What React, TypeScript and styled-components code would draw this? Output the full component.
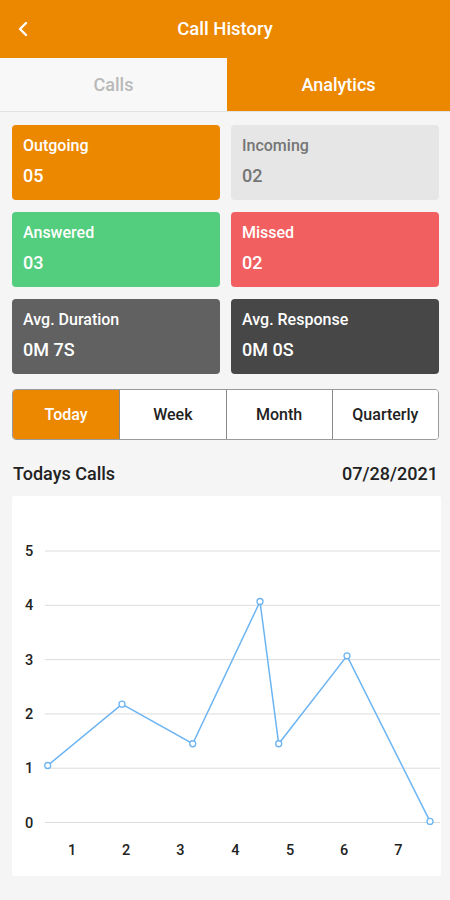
import styled, { createGlobalStyle } from "styled-components";

const GlobalStyle = createGlobalStyle`
  html, body {
    margin: 0;
    padding: 0;
    background: #f5f5f5;
    font-family: Roboto, "Noto Sans", sans-serif;
  }
  * { box-sizing: border-box; }
`;

const ORANGE = "#ec8700";

const Page = styled.div`
  width: 450px;
  min-height: 900px;
  background: #f5f5f5;
  display: flex;
  flex-direction: column;
`;

const Header = styled.header`
  height: 58px;
  background: ${ORANGE};
  display: grid;
  grid-template-columns: 48px 1fr 48px;
  align-items: center;
`;

const BackButton = styled.button`
  border: none;
  background: transparent;
  padding: 0 0 0 17px;
  height: 58px;
  display: flex;
  align-items: center;
  cursor: pointer;
`;

const Title = styled.h1`
  margin: 0;
  text-align: center;
  color: #ffffff;
  font-size: 18.5px;
  font-weight: 500;
`;

const Tabs = styled.div`
  display: grid;
  grid-template-columns: 227px 1fr;
  height: 54px;
  border-bottom: 1px solid #e2e2e2;
`;

const Tab = styled.div<{ $active?: boolean }>`
  display: flex;
  align-items: center;
  justify-content: center;
  font-size: 18px;
  font-weight: 500;
  background: ${(p) => (p.$active ? ORANGE : "#f8f8f8")};
  color: ${(p) => (p.$active ? "#ffffff" : "#b8b8b8")};
`;

const Content = styled.div`
  padding: 13px 11px 0 12px;
  display: flex;
  flex-direction: column;
`;

const StatGrid = styled.div`
  display: grid;
  grid-template-columns: 208px 208px;
  column-gap: 11px;
  row-gap: 12px;
`;

const StatCard = styled.div<{ $bg: string; $fg: string }>`
  height: 75px;
  border-radius: 4px;
  background: ${(p) => p.$bg};
  color: ${(p) => p.$fg};
  padding: 12px 11px 0;
  display: flex;
  flex-direction: column;
  gap: 11px;
`;

const StatLabel = styled.span`
  font-size: 16px;
  font-weight: 500;
  line-height: 18px;
`;

const StatValue = styled.span`
  font-size: 18px;
  font-weight: 500;
  line-height: 20px;
`;

const Segmented = styled.div`
  margin-top: 15px;
  height: 51px;
  display: grid;
  grid-template-columns: repeat(4, 1fr);
  border: 1px solid #9a9a9a;
  border-radius: 4px;
  overflow: hidden;
  background: #ffffff;
`;

const Segment = styled.div<{ $active?: boolean }>`
  display: flex;
  align-items: center;
  justify-content: center;
  font-size: 16px;
  font-weight: 500;
  background: ${(p) => (p.$active ? ORANGE : "#ffffff")};
  color: ${(p) => (p.$active ? "#ffffff" : "#222222")};
  border-left: 1px solid #8a8a8a;
  &:first-child {
    border-left: none;
  }
`;

const ChartHeader = styled.div`
  margin-top: 23px;
  display: flex;
  justify-content: space-between;
  align-items: center;
  padding: 0 1px;
  font-size: 18px;
  font-weight: 500;
  color: #222222;
`;

const ChartCard = styled.div`
  margin-top: 12px;
  width: 429px;
  height: 380px;
  background: #ffffff;
  border-radius: 3px;
`;

const stats = [
  { label: "Outgoing", value: "05", bg: ORANGE, fg: "#ffffff" },
  { label: "Incoming", value: "02", bg: "#e6e6e6", fg: "#757575" },
  { label: "Answered", value: "03", bg: "#53cd7e", fg: "#ffffff" },
  { label: "Missed", value: "02", bg: "#f15f61", fg: "#ffffff" },
  { label: "Avg. Duration", value: "0M 7S", bg: "#616161", fg: "#ffffff" },
  { label: "Avg. Response", value: "0M 0S", bg: "#474747", fg: "#ffffff" },
];

const periods = ["Today", "Week", "Month", "Quarterly"];

// chart geometry, in card coordinates
const gridTop = 55;
const gridStep = 54.3;
const yFor = (v: number) => gridTop + (5 - v) * gridStep;
const points: [number, number][] = [
  [35.7, 1.05],
  [110, 2.18],
  [180.7, 1.45],
  [248, 4.07],
  [266.7, 1.45],
  [335, 3.07],
  [418, 0.02],
];
const xLabels = [60, 114, 168.3, 223.3, 278, 332, 386.3];

const LineChart = () => {
  const path = points.map(([x, v]) => `${x},${yFor(v)}`).join(" ");
  return (
    <svg width="429" height="380" viewBox="0 0 429 380">
      {[5, 4, 3, 2, 1, 0].map((v) => (
        <g key={v}>
          <line
            x1={33}
            x2={428}
            y1={yFor(v)}
            y2={yFor(v)}
            stroke="#dcdcdc"
            strokeWidth={1}
          />
          <text
            x={17}
            y={yFor(v) + 5}
            textAnchor="middle"
            fontFamily="Roboto, sans-serif"
            fontSize="14.5"
            fontWeight="500"
            fill="#222"
          >
            {v}
          </text>
        </g>
      ))}
      {xLabels.map((x, i) => (
        <text
          key={i}
          x={x}
          y={359}
          textAnchor="middle"
          fontFamily="Roboto, sans-serif"
          fontSize="14.5"
          fontWeight="500"
          fill="#222"
        >
          {i + 1}
        </text>
      ))}
      <polyline points={path} fill="none" stroke="#6cb4f2" strokeWidth={1.5} />
      {points.map(([x, v], i) => (
        <circle
          key={i}
          cx={x}
          cy={yFor(v)}
          r={3}
          fill="#ffffff"
          stroke="#6cb4f2"
          strokeWidth={1.3}
        />
      ))}
    </svg>
  );
};

export default function App() {
  return (
    <Page>
      <GlobalStyle />
      <Header>
        <BackButton aria-label="Back">
          <svg width="12" height="16" viewBox="0 0 12 16">
            <polyline
              points="9,2 3,8 9,14"
              fill="none"
              stroke="#ffffff"
              strokeWidth="2.4"
              strokeLinecap="round"
              strokeLinejoin="round"
            />
          </svg>
        </BackButton>
        <Title>Call History</Title>
        <span />
      </Header>
      <Tabs>
        <Tab>Calls</Tab>
        <Tab $active>Analytics</Tab>
      </Tabs>
      <Content>
        <StatGrid>
          {stats.map((s) => (
            <StatCard key={s.label} $bg={s.bg} $fg={s.fg}>
              <StatLabel>{s.label}</StatLabel>
              <StatValue>{s.value}</StatValue>
            </StatCard>
          ))}
        </StatGrid>
        <Segmented>
          {periods.map((p, i) => (
            <Segment key={p} $active={i === 0}>
              {p}
            </Segment>
          ))}
        </Segmented>
        <ChartHeader>
          <span>Todays Calls</span>
          <span>07/28/2021</span>
        </ChartHeader>
        <ChartCard>
          <LineChart />
        </ChartCard>
      </Content>
    </Page>
  );
}
